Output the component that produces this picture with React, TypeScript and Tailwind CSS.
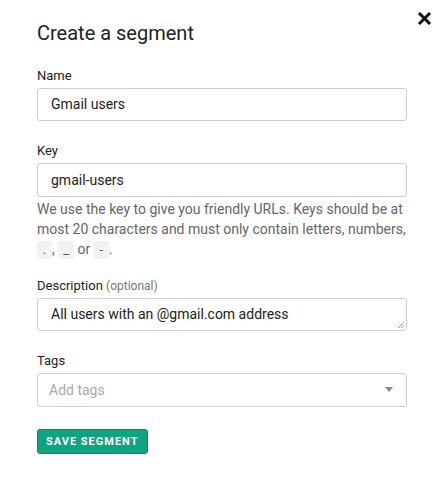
import React from "react";

const font = { fontFamily: "Roboto, 'Noto Sans', sans-serif" };

function Label({ children }: { children: React.ReactNode }) {
  return <div className="text-[13px] leading-[16px] text-[#222] mb-[4px]">{children}</div>;
}

function Code({ children }: { children: React.ReactNode }) {
  return (
    <span className="inline-flex items-center justify-center min-w-[15px] h-[18px] bg-[#f2f2f2] rounded-[3px] px-[5px] text-[13px] leading-[18px] text-[#555] align-middle">
      {children}
    </span>
  );
}

export default function App() {
  return (
    <div className="relative w-[445px] h-[491px] bg-white" style={font}>
      <button className="absolute left-[417px] top-[11px] w-[15px] h-[15px] flex items-center justify-center">
        <svg width="15" height="15" viewBox="0 0 15 15">
          <path d="M2 2 L13 13 M13 2 L2 13" stroke="#111" strokeWidth="3" strokeLinecap="butt" />
        </svg>
      </button>
      <div className="px-[37px] pt-[21px] w-[444px]">
        <h1 className="text-[20px] leading-[24px] text-[#222] font-normal">Create a segment</h1>

        <div className="mt-[23px]">
          <Label>Name</Label>
          <div className="h-[33px] border border-[#cfcfcf] rounded-[3px] px-[13px] flex items-center text-[14px] text-[#222]">
            Gmail users
          </div>
        </div>

        <div className="mt-[22px]">
          <Label>Key</Label>
          <div className="h-[34px] border border-[#cfcfcf] rounded-[3px] px-[13px] flex items-center text-[14px] text-[#222]">
            gmail-users
          </div>
          <p className="mt-[2px] text-[14px] leading-[20px] text-[#666]">
            We use the key to give you friendly URLs. Keys should be at most 20 characters and must only contain letters, numbers,{" "}
            <Code>.</Code>, <Code>_</Code> or <Code>-</Code>.
          </p>
        </div>

        <div className="mt-[19px]">
          <Label>
            Description <span className="text-[12px] text-[#777]">(optional)</span>
          </Label>
          <div className="relative h-[33px] border border-[#cfcfcf] rounded-[3px] px-[13px] flex items-center text-[14px] text-[#222]">
            All users with an @gmail.com address
            <svg className="absolute right-[1px] bottom-[1px]" width="8" height="8" viewBox="0 0 8 8">
              <path d="M1 7 L7 1 M4 7 L7 4" stroke="#888" strokeWidth="0.8" />
            </svg>
          </div>
        </div>

        <div className="mt-[22px]">
          <Label>Tags</Label>
          <div className="h-[34px] border border-[#cfcfcf] rounded-[3px] pl-[11px] pr-[12px] flex items-center justify-between text-[14px]">
            <span className="text-[#aaa]">Add tags</span>
            <svg width="10" height="6" viewBox="0 0 10 6">
              <path d="M1 0 L9 0 L5 5 Z" fill="#888" />
            </svg>
          </div>
        </div>

        <button className="mt-[22px] h-[25px] px-[8px] bg-[#10a37f] border border-[#0c8c6c] rounded-[3px] text-white text-[11px] font-bold tracking-[1px] uppercase leading-none">
          Save segment
        </button>
      </div>
    </div>
  );
}
